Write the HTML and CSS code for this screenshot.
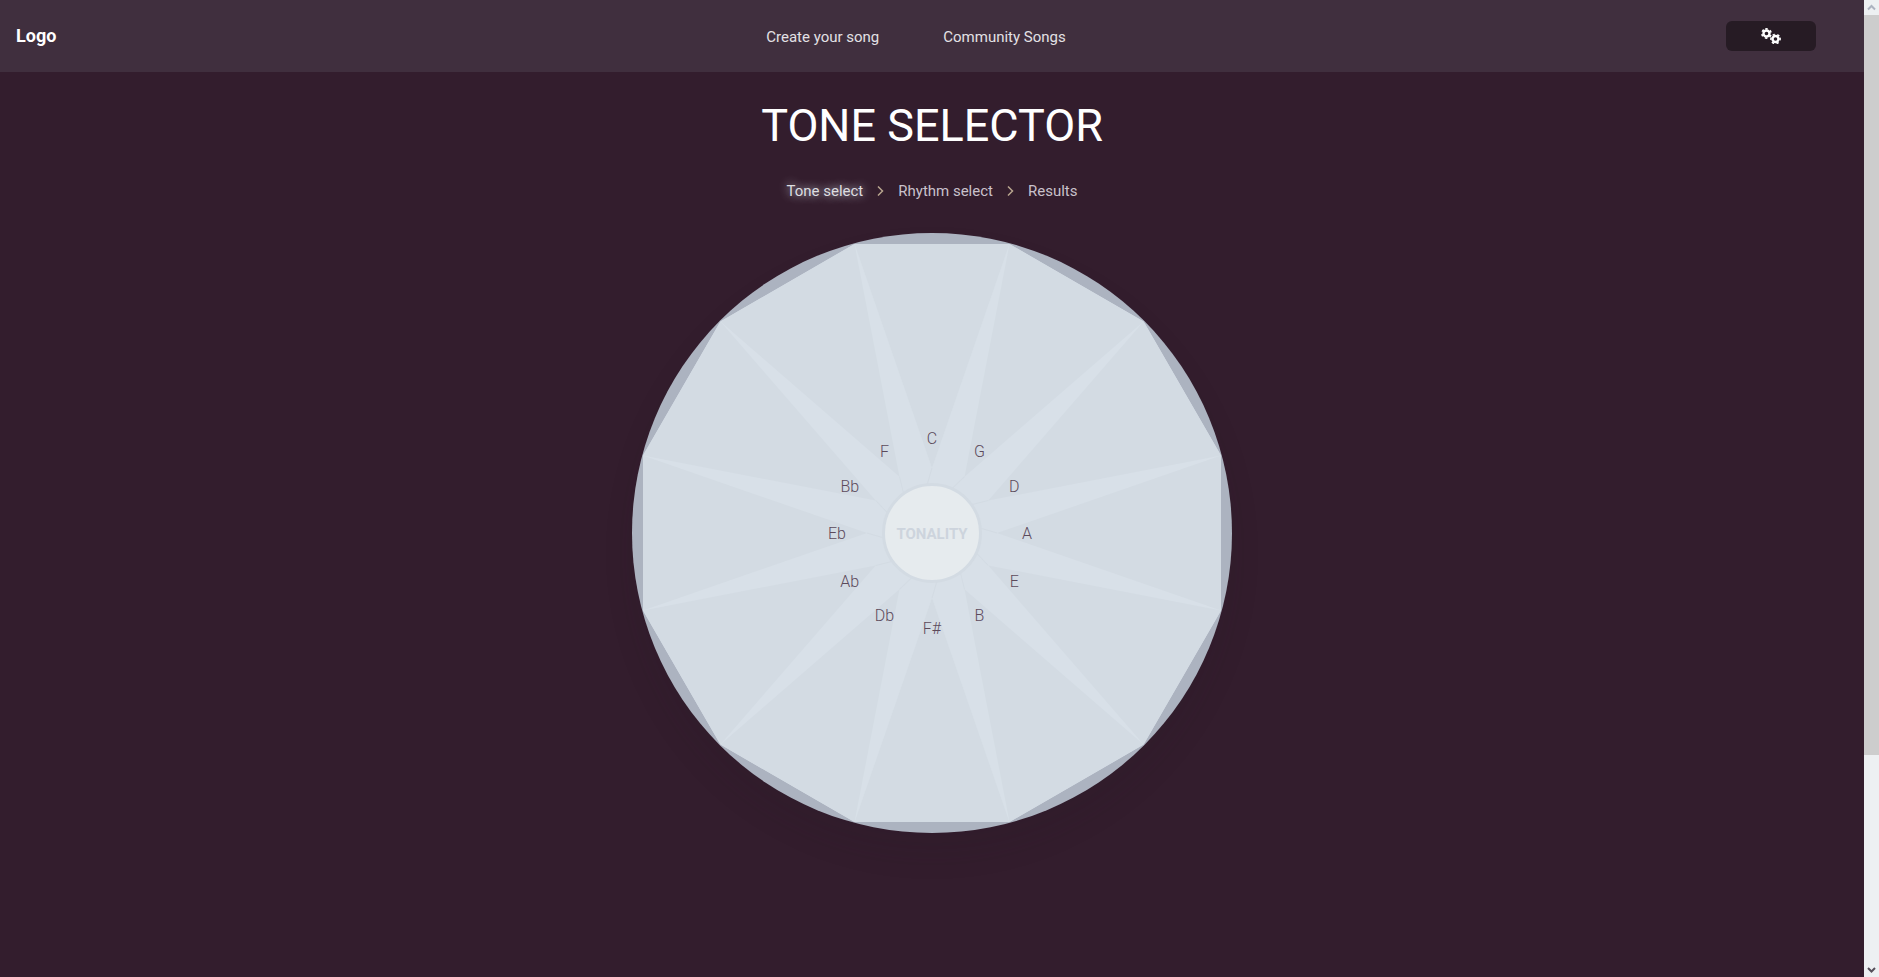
FILE: index.html
```
<!DOCTYPE html>
<html lang="en">
<head>
<meta charset="utf-8">
<title>Tone selector</title>
<link rel="stylesheet" href="styles.css">
</head>
<body>
<div class="page">
  <header class="navbar">
    <a class="logo" href="#">Logo</a>
    <nav class="links">
      <a href="#">Create your song</a>
      <a href="#">Community Songs</a>
    </nav>
    <button class="settings" type="button" aria-label="Settings">
      <svg width="20" height="16" viewBox="0 0 20 16" aria-hidden="true">
        <g fill="none" stroke="#fff">
          <circle cx="5.5" cy="5.5" r="3" stroke-width="2.4"/>
          <circle cx="5.5" cy="5.5" r="4.6" stroke-width="1.6" stroke-dasharray="2.4 2.417" transform="rotate(-105 5.5 5.5)"/>
          <circle cx="14.5" cy="11" r="3" stroke-width="2.4"/>
          <circle cx="14.5" cy="11" r="4.6" stroke-width="1.6" stroke-dasharray="2.4 2.417" transform="rotate(-15 14.5 11)"/>
        </g>
      </svg>
    </button>
  </header>
  <main class="content">
    <h1 class="title">TONE SELECTOR</h1>
    <nav class="steps" aria-label="Steps">
      <a class="current" href="#">Tone select</a>
      <svg class="chevron" width="7" height="10" viewBox="0 0 7 10" aria-hidden="true"><path d="M1 .5L5.500 5L1 9.500"/></svg>
      <a href="#">Rhythm select</a>
      <svg class="chevron" width="7" height="10" viewBox="0 0 7 10" aria-hidden="true"><path d="M1 .5L5.500 5L1 9.500"/></svg>
      <a href="#">Results</a>
    </nav>
    <div class="wheel">
      <svg class="wheel-art" viewBox="-300 -300 600 600" aria-hidden="true">
        <defs>
          <g id="wedge"><path class="wedge" d="M-77.4 -289H77.4L0 -65Z"/><path class="seam" d="M0 -65L-5 -48"/></g>
        </defs>
        <circle class="rim" r="300"/>
        <path class="facets" d="M-77.4 -289H77.4L211.6 -211.6L289 -77.4V77.4L211.6 211.6L77.4 289H-77.4L-211.6 211.6L-289 77.4V-77.4L-211.6 -211.6Z"/>
        <use href="#wedge"/>
        <use href="#wedge" transform="rotate(30)"/>
        <use href="#wedge" transform="rotate(60)"/>
        <use href="#wedge" transform="rotate(90)"/>
        <use href="#wedge" transform="rotate(120)"/>
        <use href="#wedge" transform="rotate(150)"/>
        <use href="#wedge" transform="rotate(180)"/>
        <use href="#wedge" transform="rotate(210)"/>
        <use href="#wedge" transform="rotate(240)"/>
        <use href="#wedge" transform="rotate(270)"/>
        <use href="#wedge" transform="rotate(300)"/>
        <use href="#wedge" transform="rotate(330)"/>
      </svg>
      <button class="tone a0" type="button">C</button>
      <button class="tone a30" type="button">G</button>
      <button class="tone a60" type="button">D</button>
      <button class="tone a90" type="button">A</button>
      <button class="tone a120" type="button">E</button>
      <button class="tone a150" type="button">B</button>
      <button class="tone a180" type="button">F#</button>
      <button class="tone a210" type="button">Db</button>
      <button class="tone a240" type="button">Ab</button>
      <button class="tone a270" type="button">Eb</button>
      <button class="tone a300" type="button">Bb</button>
      <button class="tone a330" type="button">F</button>
      <button class="hub" type="button">TONALITY</button>
    </div>
  </main>
</div>
<div class="scrollbar" aria-hidden="true">
  <svg class="arrow up" width="15" height="15" viewBox="0 0 15 15"><path d="M4 9.500l3.500-3.500 3.500 3.500"/></svg>
  <div class="thumb"></div>
  <div class="rest"></div>
  <svg class="arrow" width="15" height="15" viewBox="0 0 15 15"><path d="M4 6l3.500 3.500L11 6"/></svg>
</div>
</body>
</html>
```
FILE: styles.css
```
* { box-sizing: border-box; }

body {
  margin: 0;
  height: 100vh;
  display: grid;
  grid-template-columns: 1fr 15px;
  overflow: hidden;
  background: #331d2d;
  color: #fff;
  font-family: Roboto, "Open Sans", sans-serif;
  font-size: 15px;
  line-height: 24px;
}

a { color: inherit; text-decoration: none; }

button {
  border: 0;
  padding: 0;
  font: inherit;
  cursor: pointer;
}

.navbar {
  display: grid;
  grid-template-columns: 1fr auto 1fr;
  align-items: center;
  height: 72px;
  padding: 0 48px 0 16px;
  background: #402f3e;
}

.logo { font-size: 18px; font-weight: 700; }

.links { display: flex; gap: 64px; padding-top: 2px; color: #e3e1e5; }

.settings {
  justify-self: end;
  display: flex;
  align-items: center;
  justify-content: center;
  width: 90px;
  height: 30px;
  border-radius: 6px;
  background: #261b24;
}

.content {
  display: flex;
  flex-direction: column;
  align-items: center;
  padding-top: 24px;
}

.title {
  margin: 0;
  font-size: 45px;
  line-height: 60px;
  font-weight: 400;
}

.steps {
  display: flex;
  align-items: center;
  gap: 14px;
  margin: 23px 0 30px;
  color: #c9c1cb;
}

.current {
  color: #dddde0;
  text-shadow: 0 0 10px #d3dbe3;
}

.chevron { fill: none; stroke: #b8a58e; stroke-width: 1.5; }

.wheel {
  position: relative;
  width: 600px;
  height: 600px;
  border-radius: 50%;
  box-shadow: 0 20px 30px rgba(30, 25, 35, 0.12);
}

.wheel-art { display: block; width: 100%; height: 100%; }
.rim { fill: #acb3c0; }
.facets { fill: #d8e0e8; }
.wedge { fill: #d3dbe3; }
.seam { stroke: #d3dbe3; stroke-width: 1; }

.tone {
  position: absolute;
  left: calc(50% + 95px * sin(var(--angle)));
  top: calc(50% - 95px * cos(var(--angle)));
  width: 32px;
  height: 24px;
  margin: -11px 0 0 -16px;
  background: none;
  color: #5c4a5b;
  font-size: 16px;
  font-weight: 300;
}

.a0 { --angle: 0deg; }
.a30 { --angle: 30deg; }
.a60 { --angle: 60deg; }
.a90 { --angle: 90deg; }
.a120 { --angle: 120deg; }
.a150 { --angle: 150deg; }
.a180 { --angle: 180deg; }
.a210 { --angle: 210deg; }
.a240 { --angle: 240deg; }
.a270 { --angle: 270deg; }
.a300 { --angle: 300deg; }
.a330 { --angle: 330deg; }

.hub {
  position: absolute;
  inset: 0;
  margin: auto;
  width: 100px;
  height: 100px;
  padding-top: 1px;
  border: 3px solid #d3dbe3;
  border-radius: 50%;
  background: #e6ebee;
  color: #cdd4dd;
  font-size: 15px;
  font-weight: 700;
}

.scrollbar {
  display: flex;
  flex-direction: column;
  background: #edf0f2;
}

.thumb { flex: 740; background: #cdcdcd; }
.rest { flex: 207; }
.arrow { fill: none; stroke: #55505a; stroke-width: 2; }
.up { stroke: #acb3c0; }
```
